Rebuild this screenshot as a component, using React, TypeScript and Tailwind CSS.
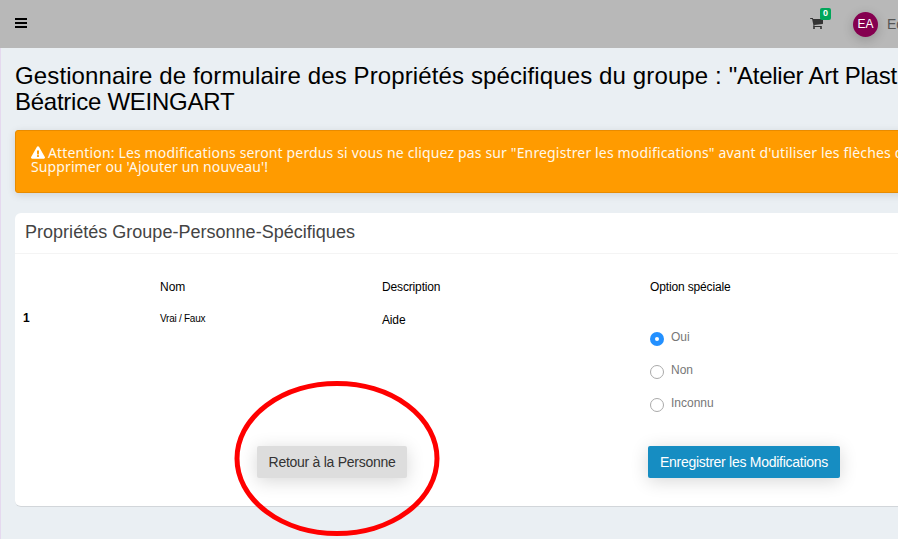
import { FaExclamationTriangle } from "react-icons/fa";

const options = ["Oui", "Non", "Inconnu"];

function Header() {
  return (
    <header className="flex h-12 items-center bg-[#b8b8b8] pl-[15px] text-black">
      <svg width="12" height="10" viewBox="0 0 12 10" className="mt-[-2px] shrink-0" shapeRendering="crispEdges">
        <path d="M0 0h12v2H0zM0 4h12v2H0zM0 8h12v2H0z" />
      </svg>
      <div className="relative ml-[783px] shrink-0">
        <svg width="13" height="12" viewBox="0 0 1664 1536" className="mt-[-2px] mb-px fill-[#333]">
          <path d="M640 1408q0 52-38 90t-90 38-90-38-38-90 38-90 90-38 90 38 38 90zm896 0q0 52-38 90t-90 38-90-38-38-90 38-90 90-38 90 38 38 90zm128-1088v512q0 24-16.500 42.500t-40.500 21.500l-1044 122q13 60 13 70 0 16-24 64h920q26 0 45 19t19 45-19 45-45 19h-1024q-26 0-45-19t-19-45q0-11 8-31.500t16-36 21.500-40 15.500-29.500l-177-823h-204q-26 0-45-19t-19-45 19-45 45-19h256q16 0 28.500 6.500t19.500 15.500 13 24.500 8 26 5.500 29.500 4.500 26h1201q26 0 45 19t19 45z" />
        </svg>
        <span className="absolute top-[-11px] left-[10px] flex h-3 w-[11px] items-center justify-center rounded-[2px] bg-[#00a65a] text-[9px] leading-none font-bold text-white">0</span>
      </div>
      <div className="ml-[30px] flex size-[25px] shrink-0 items-center justify-center rounded-full bg-[#850050] text-[12px] text-white shadow-[0_3px_12px_rgba(0,0,0,0.2)]">EA</div>
      <span className="ml-[9px] shrink-0 text-[14px] text-[#555]">Ed</span>
    </header>
  );
}

function Warning() {
  return (
    <div className="mt-[14px] h-[63px] w-[920px] rounded-[3px] border border-[#e88b00] bg-[#ff9b00] px-[15px] pt-[15px] font-['Noto_Sans',sans-serif] text-[14px] leading-[14px] tracking-[0.15px] whitespace-nowrap text-[#fff8ea] shadow-[0_2px_8px_rgba(0,0,0,0.12)]">
      <p><FaExclamationTriangle className="mr-[3px] inline h-[13px] w-[14px] align-[-1px] text-white" /><span>Attention: Les modifications seront perdus si vous ne cliquez pas sur "Enregistrer les modifications" avant d'utiliser les flèches de</span></p>
      <p className="tracking-[0.11px]">Supprimer ou 'Ajouter un nouveau'!</p>
    </div>
  );
}

function Panel() {
  return (
    <section className="mt-[20px] h-[294px] w-[920px] rounded-[6px] border-b border-[#d2d6da] bg-white">
      <h2 className="h-[41px] border-b border-[#f4f4f4] pl-[10px] text-[18px] leading-[38px] tracking-[0.02px] text-[#444]">Propriétés Groupe-Personne-Spécifiques</h2>
      <div className="grid h-[192px] grid-cols-[145px_222px_268px_200px] grid-rows-[32px_1fr] pt-[25px] text-[12px] leading-4 text-black">
        <span />
        <span>Nom</span>
        <span className="tracking-[-0.15px]">Description</span>
        <span className="tracking-[-0.15px]">Option spéciale</span>
        <span className="mt-[-1px] pl-[8px] font-bold">1</span>
        <span className="text-[10px] tracking-[-0.25px]">Vrai / Faux</span>
        <span className="pt-px tracking-[-0.15px]">Aide</span>
        <div className="flex flex-col pt-[19px] text-[#777]">
          {options.map((option, i) => (
            <label key={option} className="flex h-[33px] shrink-0 items-start">
              <span className={i === 0 ? "mt-0.5 flex size-[14px] items-center justify-center rounded-full bg-[#2390ff]" : "mt-0.5 size-[14px] rounded-full border border-[#aaa]"}>
                {i === 0 && <span className="size-1 rounded-full bg-white" />}
              </span>
              <span className="mt-[-1px] ml-[7px]">{option}</span>
            </label>
          ))}
        </div>
      </div>
      <div className="flex pl-[242px] text-[14px] leading-8 tracking-[-0.27px]">
        <button className="h-8 w-[150px] rounded-[2px] bg-[#ddd] whitespace-nowrap text-[#333] shadow-[0_3px_18px_rgba(0,0,0,0.16)]">Retour à la Personne</button>
        <button className="ml-[241px] h-8 w-[192px] rounded-[2px] bg-[#168dc2] whitespace-nowrap text-white shadow-[0_3px_18px_rgba(0,0,0,0.16)]">Enregistrer les Modifications</button>
      </div>
    </section>
  );
}

export default function App() {
  return (
    <div className="relative h-[539px] w-[898px] overflow-hidden bg-[#eaeff3] font-['Liberation_Sans',sans-serif]">
      <Header />
      <main className="h-[491px] border-l border-[#e5d9ef] pt-[15px] pl-[14px]">
        <h1 className="h-[53px] text-[24px] leading-[26px] whitespace-nowrap text-black">
          <span className="tracking-[0.12px]">Gestionnaire de formulaire des Propriétés spécifiques du groupe : <span className="tracking-[-0.24px]">"Atelier Art Plast</span></span><br />
          <span className="tracking-[-0.25px]">Béatrice WEINGART</span>
        </h1>
        <Warning />
        <Panel />
      </main>
      <svg className="pointer-events-none absolute top-[378px] left-[232px]" width="210" height="160" viewBox="0 0 210 160" fill="none">
        <ellipse cx="105" cy="80.500" rx="100" ry="75" stroke="#f00" strokeWidth="5" />
      </svg>
    </div>
  );
}
